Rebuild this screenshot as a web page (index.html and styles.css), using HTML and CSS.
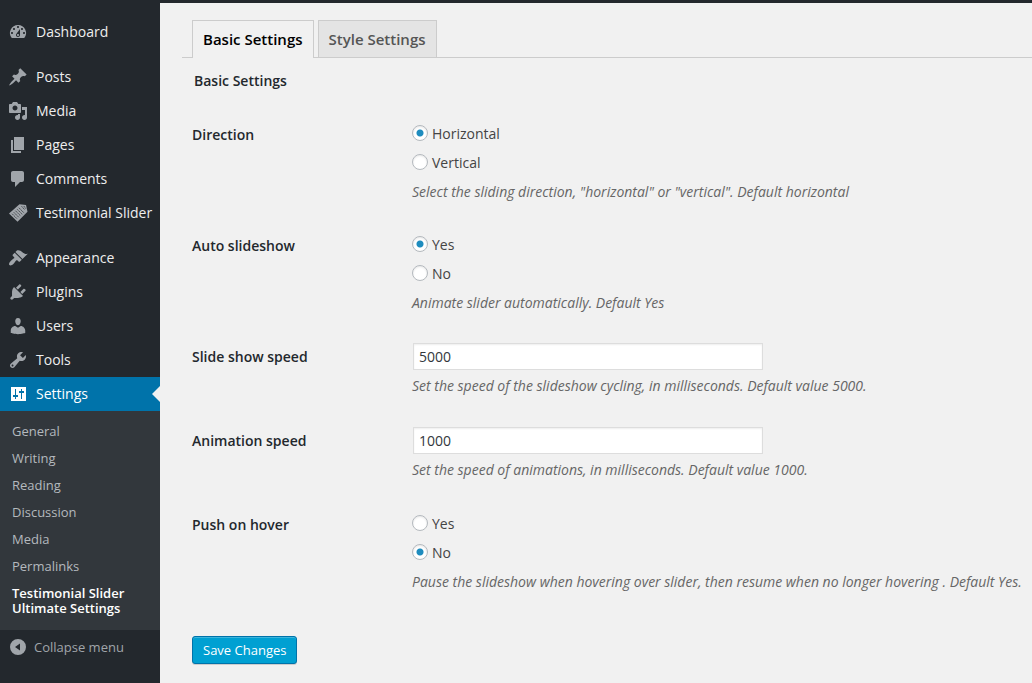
FILE: index.html
```html
<!DOCTYPE html>
<html lang="en">
<head>
<meta charset="utf-8">
<meta name="viewport" content="width=device-width, initial-scale=1">
<title>Testimonial Slider Ultimate Settings</title>
<link rel="stylesheet" href="styles.css">
</head>
<body>
<div class="admin">
  <nav class="sidebar" aria-label="Main menu">
    <ul class="menu">
      <li><a class="menu-item" href="#"><svg class="icon" viewBox="0 0 20 20" aria-hidden="true"><path fill-rule="evenodd" d="M3.76 16h12.48A7.998 7.998 0 0 0 10 3a7.998 7.998 0 0 0-6.24 13zM10 4c.55 0 1 .45 1 1s-.45 1-1 1-1-.45-1-1 .45-1 1-1zM6 6c.55 0 1 .45 1 1s-.45 1-1 1-1-.45-1-1 .45-1 1-1zm8 0c.55 0 1 .45 1 1s-.45 1-1 1-1-.45-1-1 .45-1 1-1zm-5.370 5.550L12 7v6c0 1.100-.9 2-2 2s-2-.9-2-2c0-.570.240-1.080.630-1.450zM4 10c.55 0 1 .45 1 1s-.45 1-1 1-1-.45-1-1 .45-1 1-1zm12 0c.55 0 1 .45 1 1s-.45 1-1 1-1-.45-1-1 .45-1 1-1zm-5 3c0-.55-.45-1-1-1s-1 .45-1 1 .45 1 1 1 1-.45 1-1z"/></svg>Dashboard</a></li>
    </ul>
    <ul class="menu">
      <li><a class="menu-item" href="#"><svg class="icon" viewBox="0 0 20 20" aria-hidden="true"><path d="M10.44 3.02l1.82-1.82 6.36 6.35-1.83 1.82c-1.05-.68-2.48-.57-3.41.36l-.75.75c-.92.93-1.04 2.35-.35 3.41l-1.83 1.82-2.41-2.41-2.8 2.79c-.42.42-3.38 2.71-3.8 2.29s1.86-3.39 2.28-3.81l2.79-2.79L4.1 9.36l1.83-1.82c1.05.69 2.48.57 3.4-.36l.75-.75c.93-.92 1.05-2.35.36-3.41z"/></svg>Posts</a></li>
      <li><a class="menu-item" href="#"><svg class="icon" viewBox="0 0 20 20" aria-hidden="true"><path fill-rule="evenodd" d="M13 11V4c0-.55-.45-1-1-1h-1.67L9 1H5L3.67 3H2c-.55 0-1 .45-1 1v7c0 .55.45 1 1 1h10c.55 0 1-.45 1-1zM7 4.5c1.38 0 2.5 1.12 2.5 2.5S8.38 9.5 7 9.5 4.5 8.38 4.5 7 5.62 4.5 7 4.5zM14 6h5v10.5c0 1.38-1.12 2.5-2.5 2.5S14 17.88 14 16.5s1.12-2.5 2.5-2.5c.17 0 .34.02.5.05V9h-3V6zm-4 8.05V13h2v3.5c0 1.38-1.12 2.5-2.5 2.5S7 17.88 7 16.5 8.12 14 9.5 14c.17 0 .34.02.5.05z"/></svg>Media</a></li>
      <li><a class="menu-item" href="#"><svg class="icon" viewBox="0 0 20 20" aria-hidden="true"><path d="M6 15V2h10v13H6zm-1 1h8v2H3V5h2v11z"/></svg>Pages</a></li>
      <li><a class="menu-item" href="#"><svg class="icon" viewBox="0 0 20 20" aria-hidden="true"><path d="M5 2h9c1.1 0 2 .9 2 2v7c0 1.1-.9 2-2 2h-2l-5 5v-5H5c-1.1 0-2-.9-2-2V4c0-1.1.9-2 2-2z"/></svg>Comments</a></li>
      <li><a class="menu-item" href="#"><svg class="icon" viewBox="0 0 20 20" aria-hidden="true"><path d="M1 10.500L11.500 1.200L18 2L19.500 8.800L9.500 18.800z"/><g class="icon-lines"><path d="M4 10.700l5.400 5.400M5.700 9.200l5.400 5.400M7.400 7.700l5.400 5.400M9.100 6.200l5.400 5.400M10.800 4.700l5.400 5.400"/><path d="M13.500 3.200l3.300 3.600M15.800 3l1.900 2.600"/></g></svg>Testimonial Slider</a></li>
    </ul>
    <ul class="menu">
      <li><a class="menu-item" href="#"><svg class="icon" viewBox="0 0 20 20" aria-hidden="true"><path d="M14.48 11.06L7.41 3.99l1.5-1.5c.5-.56 2.3-.47 3.51.32 1.21.8 1.43 1.28 2.91 2.1 1.18.64 2.45 1.26 4.45.85zm-.71.71L6.7 4.7 4.93 6.47c-.39.39-.39 1.02 0 1.41l1.06 1.06c.39.39.39 1.03 0 1.42-.6.6-1.43 1.11-2.21 1.69-.35.26-.7.53-1.01.84C1.43 14.23.4 16.08 1.4 17.07c.99 1 2.84-.03 4.18-1.36.31-.31.58-.66.85-1.02.57-.78 1.08-1.61 1.69-2.21.39-.39 1.02-.39 1.41 0l1.06 1.06c.39.39 1.02.39 1.41 0z"/></svg>Appearance</a></li>
      <li><a class="menu-item" href="#"><svg class="icon" viewBox="0 0 20 20" aria-hidden="true"><path d="M13.11 4.36L9.87 7.6 8 5.73l3.24-3.24c.35-.34 1.05-.2 1.56.32.52.51.66 1.21.31 1.55zm-8 1.77l.91-1.12 9.01 9.01-1.19.84c-.71.71-2.63 1.16-3.82 1.16H6.14L4.9 17.26c-.59.59-1.54.59-2.12 0-.59-.58-.59-1.53 0-2.12l1.24-1.24v-3.88c0-1.13.4-3.19 1.09-3.89zm7.26 3.97l3.24-3.24c.34-.35 1.04-.21 1.55.31.52.51.66 1.21.31 1.55l-3.24 3.25z"/></svg>Plugins</a></li>
      <li><a class="menu-item" href="#"><svg class="icon" viewBox="0 0 20 20" aria-hidden="true"><path d="M10 9.25c-2.27 0-2.73-3.44-2.73-3.44C7 4.02 7.82 2 9.97 2c2.16 0 2.98 2.02 2.71 3.81 0 0-.41 3.44-2.68 3.44zm0 2.57L12.72 10c2.39 0 4.52 2.33 4.52 4.53v2.49s-3.65 1.13-7.24 1.13c-3.65 0-7.24-1.13-7.24-1.13v-2.49c0-2.25 1.94-4.48 4.47-4.48z"/></svg>Users</a></li>
      <li><a class="menu-item" href="#"><svg class="icon" viewBox="0 0 20 20" aria-hidden="true"><path d="M16.68 9.77c-1.34 1.34-3.3 1.67-4.95.99l-5.41 6.52c-.99.99-2.59.99-3.58 0s-.99-2.59 0-3.57l6.52-5.42c-.68-1.65-.35-3.61.99-4.95 1.28-1.28 3.12-1.62 4.72-1.06l-2.89 2.89 2.82 2.82 2.86-2.87c.53 1.58.18 3.39-1.08 4.65zM3.81 16.21c.4.39 1.04.39 1.43 0 .4-.4.4-1.04 0-1.43-.39-.4-1.03-.4-1.43 0-.39.39-.39 1.03 0 1.43z"/></svg>Tools</a></li>
      <li>
        <a class="menu-item current" href="#" aria-current="true"><svg class="icon" viewBox="0 0 20 20" aria-hidden="true"><path fill-rule="evenodd" d="M3 3h15v14H3zM7 5h1v6h2v2H8v2H7v-2H5v-2h2zM13 5h1v2h2v2h-2v6h-1V9h-2V7h2z"/></svg>Settings</a>
        <ul class="submenu">
          <li><a href="#">General</a></li>
          <li><a href="#">Writing</a></li>
          <li><a href="#">Reading</a></li>
          <li><a href="#">Discussion</a></li>
          <li><a href="#">Media</a></li>
          <li><a href="#">Permalinks</a></li>
          <li><a class="active" href="#" aria-current="page">Testimonial Slider Ultimate Settings</a></li>
        </ul>
      </li>
    </ul>
    <button class="collapse" type="button"><svg class="icon" viewBox="0 0 20 20" aria-hidden="true"><path fill-rule="evenodd" d="M10 2a8 8 0 1 1 0 16a8 8 0 0 1 0-16zM12 6.500v7L7 10z"/></svg>Collapse menu</button>
  </nav>

  <main class="content">
    <nav class="tabs" aria-label="Settings sections">
      <a class="tab selected" href="#" aria-current="page">Basic Settings</a>
      <a class="tab" href="#">Style Settings</a>
    </nav>
    <form class="settings">
      <h1 class="section-title">Basic Settings</h1>

      <div class="row" role="radiogroup" aria-labelledby="direction">
        <span class="name" id="direction">Direction</span>
        <div class="field">
          <label class="choice"><input type="radio" name="direction" checked>Horizontal</label>
          <label class="choice"><input type="radio" name="direction">Vertical</label>
          <p class="hint">Select the sliding direction, "horizontal" or "vertical". Default horizontal</p>
        </div>
      </div>

      <div class="row" role="radiogroup" aria-labelledby="auto">
        <span class="name" id="auto">Auto slideshow</span>
        <div class="field">
          <label class="choice"><input type="radio" name="auto" checked>Yes</label>
          <label class="choice"><input type="radio" name="auto">No</label>
          <p class="hint">Animate slider automatically. Default Yes</p>
        </div>
      </div>

      <div class="row">
        <label class="name" for="slide-speed">Slide show speed</label>
        <div class="field">
          <input class="text" id="slide-speed" type="text" value="5000">
          <p class="hint">Set the speed of the slideshow cycling, in milliseconds. Default value 5000.</p>
        </div>
      </div>

      <div class="row">
        <label class="name" for="animation-speed">Animation speed</label>
        <div class="field">
          <input class="text" id="animation-speed" type="text" value="1000">
          <p class="hint">Set the speed of animations, in milliseconds. Default value 1000.</p>
        </div>
      </div>

      <div class="row" role="radiogroup" aria-labelledby="pause">
        <span class="name" id="pause">Push on hover</span>
        <div class="field">
          <label class="choice"><input type="radio" name="pause">Yes</label>
          <label class="choice"><input type="radio" name="pause" checked>No</label>
          <p class="hint">Pause the slideshow when hovering over slider, then resume when no longer hovering . Default Yes.</p>
        </div>
      </div>

      <button class="save" type="submit">Save Changes</button>
    </form>
  </main>
</div>
</body>
</html>
```
FILE: styles.css
```css
* {
  box-sizing: border-box;
}

body {
  margin: 0;
  background: #f1f1f1;
  color: #444;
  font: 14px/20px "Open Sans", sans-serif;
}

a {
  color: inherit;
  text-decoration: none;
}

ul {
  margin: 0;
  padding: 0;
  list-style: none;
}

.admin {
  display: flex;
  min-height: 100vh;
  border-top: 3px solid #23282d;
}

/* Sidebar */

.sidebar {
  flex: none;
  width: 160px;
  padding-top: 12px;
  background: #23282d;
  color: #eee;
}

.menu + .menu {
  margin-top: 11px;
}

.menu-item {
  position: relative;
  display: flex;
  align-items: center;
  gap: 8px;
  height: 34px;
  padding-left: 8px;
  white-space: nowrap;
}

.icon {
  flex: none;
  width: 20px;
  height: 20px;
  fill: #a0a5aa;
}

.icon-lines {
  fill: none;
  stroke: #4a4f54;
  stroke-width: 1;
  stroke-dasharray: 2 0.4;
}

.current {
  background: #0073aa;
  color: #fff;
}

.current .icon {
  fill: #fff;
}

.current::after {
  content: "";
  position: absolute;
  top: 9px;
  right: 0;
  border: 8px solid transparent;
  border-left: 0;
  border-right-color: #f1f1f1;
}

.submenu {
  padding: 7px 0 8px;
  background: #32373c;
  color: #b4b9be;
  font-size: 13px;
  line-height: 15px;
}

.submenu a {
  display: block;
  padding: 6px 12px;
}

.submenu .active {
  color: #fff;
  font-weight: 600;
}

.collapse {
  display: flex;
  align-items: center;
  gap: 6px;
  width: 100%;
  height: 34px;
  padding: 0 8px;
  border: 0;
  background: none;
  color: #a0a5aa;
  font: 13px/20px "Open Sans", sans-serif;
}

/* Content */

.content {
  flex: 1;
  min-width: 0;
  padding: 17px 0 16px 22px;
}

.tabs {
  display: flex;
  gap: 4px;
  padding-left: 10px;
  border-bottom: 1px solid #ccc;
}

.tab {
  padding: 6px 10px;
  border: 1px solid #ccc;
  border-bottom: 0;
  background: #e4e4e4;
  color: #555;
  font-size: 15px;
  font-weight: 600;
  line-height: 24px;
}

.selected {
  margin-bottom: -1px;
  padding-bottom: 7px;
  background: #f1f1f1;
  color: #000;
}

.settings {
  padding-left: 10px;
}

.section-title {
  margin: 0;
  padding: 13px 2px 15px;
  color: #23282d;
  font-size: 14px;
  font-weight: 600;
  line-height: 20px;
}

.row {
  display: grid;
  grid-template-columns: 220px minmax(0, 1fr);
  padding: 15px 0;
}

.name {
  padding-top: 4px;
  color: #23282d;
  font-weight: 600;
}

.choice {
  display: flex;
  align-items: center;
  gap: 4px;
  height: 25px;
}

.choice + .choice {
  margin-top: 4px;
}

.choice input {
  appearance: none;
  width: 16px;
  height: 16px;
  margin: 0 0 2px;
  border: 1px solid #b4b9be;
  border-radius: 50%;
  background: #fff;
  box-shadow: inset 0 1px 2px rgba(0, 0, 0, 0.1);
}

.choice input:checked {
  background: radial-gradient(circle, #1e8cbe 3px, #fff 4px);
}

.text {
  display: block;
  width: 350px;
  max-width: 100%;
  height: 27px;
  margin: 0 1px;
  padding: 3px 5px;
  border: 1px solid #ddd;
  background: #fff;
  box-shadow: inset 0 1px 2px rgba(0, 0, 0, 0.07);
  color: #32373c;
  font: 14px/19px "Open Sans", sans-serif;
}

.hint {
  margin: 7px 0 0;
  color: #666;
  font-style: italic;
}

.text + .hint {
  margin: 6px 0 1px;
}

.save {
  display: block;
  height: 28px;
  margin-top: 29px;
  padding: 0 10px;
  border: 1px solid #0073aa;
  border-radius: 3px;
  background: #00a0d2;
  box-shadow: inset 0 1px 0 rgba(120, 200, 230, 0.5), 0 1px 0 rgba(0, 0, 0, 0.15);
  color: #fff;
  font: 13px/26px "Open Sans", sans-serif;
}
```
